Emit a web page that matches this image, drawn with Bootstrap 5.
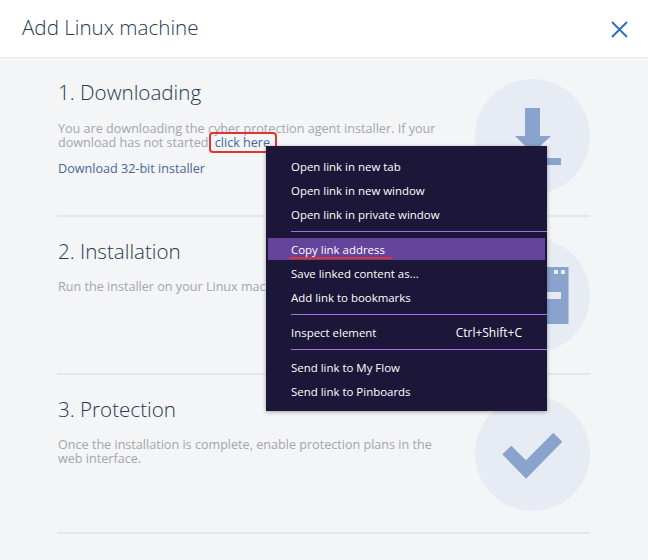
<!DOCTYPE html>
<html lang="en">
<head>
<meta charset="utf-8">
<title>Add Linux machine</title>
<link href="https://cdn.jsdelivr.net/npm/bootstrap@5.3.0/dist/css/bootstrap.min.css" rel="stylesheet">
<style>
html,body{height:560px;overflow:hidden}
body{background:#f4f5f7;font-family:"Open Sans",sans-serif;position:relative}
.dlg-head{height:58px;background:#fff;border-bottom:1px solid #e5e9f1;padding:0 20px 0 22px}
.dlg-title{font-size:20.6px;font-weight:300;color:#243a52;margin:0 0 2px}
.close-x{display:block}
.steps{padding:0 58px 0 57px}
.step{height:158.5px;border-bottom:2px solid #e6e7ea;padding-top:21px}
.step-text{width:385px;padding-left:1px}
.step-title{font-size:20.6px;font-weight:300;line-height:27px;color:#243a52;margin:0 0 15px}
.step-title.first-title{margin-bottom:16px}
.step-desc{font-size:12.6px;line-height:14px;color:#a3a6ab;margin:0}
.step-desc a,.dl32{color:#466799;text-decoration:none}
.dl32{display:block;font-size:12.6px;line-height:17px;margin-top:10px}
.hl-link{position:relative;margin-left:3px}
.hl-link::before{content:"";position:absolute;left:-6px;right:-7px;top:-2px;bottom:-2px;border:2px solid #e0352e;border-radius:4px}
.disc{width:115px;height:115px;border-radius:50%;background:#e7ebf4;flex:none}
.ctx{position:absolute;left:266px;top:146px;width:281px;height:265px;background:#1c1638;box-shadow:0 1px 4px rgba(0,0,0,.35);color:#fff;font-size:11.45px;padding-top:9px}
.ctx-item{height:24px;line-height:24px;padding-left:25px;display:flex;justify-content:space-between}
.ctx-item.on{height:22px;line-height:24px;background:#64439a;margin:0 2px 2px;padding-left:23px;position:relative}
.ctx-item.on::after{content:"";position:absolute;left:21px;top:19px;width:103px;height:2px;background:#e0352e;border-radius:1px}
.ctx-key{padding-right:25px;font-size:12px}
.ctx-sep{height:1px;background:#a66fe8;margin:4px 0 6px 25px}
</style>
</head>
<body>
<header class="dlg-head d-flex align-items-center justify-content-between">
  <h1 class="dlg-title">Add Linux machine</h1>
  <svg class="close-x" width="18" height="18" viewBox="0 0 18 18" aria-label="Close"><path d="M2 2 L17 17 M17 2 L2 17" stroke="#2a6bc4" stroke-width="1.8" fill="none"/></svg>
</header>
<main class="steps">
  <section class="step d-flex justify-content-between">
    <div class="step-text">
      <h2 class="step-title first-title">1. Downloading</h2>
      <p class="step-desc">You are downloading the cyber protection agent installer. If your download has not started <a class="hl-link" href="#">click here</a></p>
      <a class="dl32" href="#">Download 32-bit installer</a>
    </div>
    <div class="disc">
      <svg width="115" height="115" viewBox="0 0 115 115"><path d="M50 29 H65 V57 H76 L57.500 74 L40 57 H50 Z" fill="#8aa3cc"/><rect x="39" y="79" width="47" height="7" fill="#8aa3cc"/></svg>
    </div>
  </section>
  <section class="step d-flex justify-content-between">
    <div class="step-text">
      <h2 class="step-title">2. Installation</h2>
      <p class="step-desc">Run the installer on your Linux machine.</p>
    </div>
    <div class="disc">
      <svg width="115" height="115" viewBox="0 0 115 115"><rect x="60" y="29" width="33.500" height="57" fill="#8aa3cc"/><rect x="79" y="32" width="4" height="4" fill="#e7ebf4"/><rect x="86" y="32" width="4" height="4" fill="#e7ebf4"/><rect x="69" y="54" width="17" height="7" fill="#e7ebf4"/></svg>
    </div>
  </section>
  <section class="step d-flex justify-content-between">
    <div class="step-text">
      <h2 class="step-title">3. Protection</h2>
      <p class="step-desc">Once the installation is complete, enable protection plans in the web interface.</p>
    </div>
    <div class="disc">
      <svg width="115" height="115" viewBox="0 0 115 115"><path d="M27.300 58.300 L36.300 49.700 L51 64.300 L78.300 36.700 L87.300 45.700 L51 82.700 Z" fill="#8aa3cc"/></svg>
    </div>
  </section>
</main>
<nav class="ctx">
  <div class="ctx-item">Open link in new tab</div>
  <div class="ctx-item">Open link in new window</div>
  <div class="ctx-item">Open link in private window</div>
  <div class="ctx-sep"></div>
  <div class="ctx-item on">Copy link address</div>
  <div class="ctx-item">Save linked content as...</div>
  <div class="ctx-item">Add link to bookmarks</div>
  <div class="ctx-sep"></div>
  <div class="ctx-item"><span>Inspect element</span><span class="ctx-key">Ctrl+Shift+C</span></div>
  <div class="ctx-sep"></div>
  <div class="ctx-item">Send link to My Flow</div>
  <div class="ctx-item">Send link to Pinboards</div>
</nav>
<script src="https://cdn.jsdelivr.net/npm/bootstrap@5.3.0/dist/js/bootstrap.bundle.min.js"></script>
</body>
</html>
